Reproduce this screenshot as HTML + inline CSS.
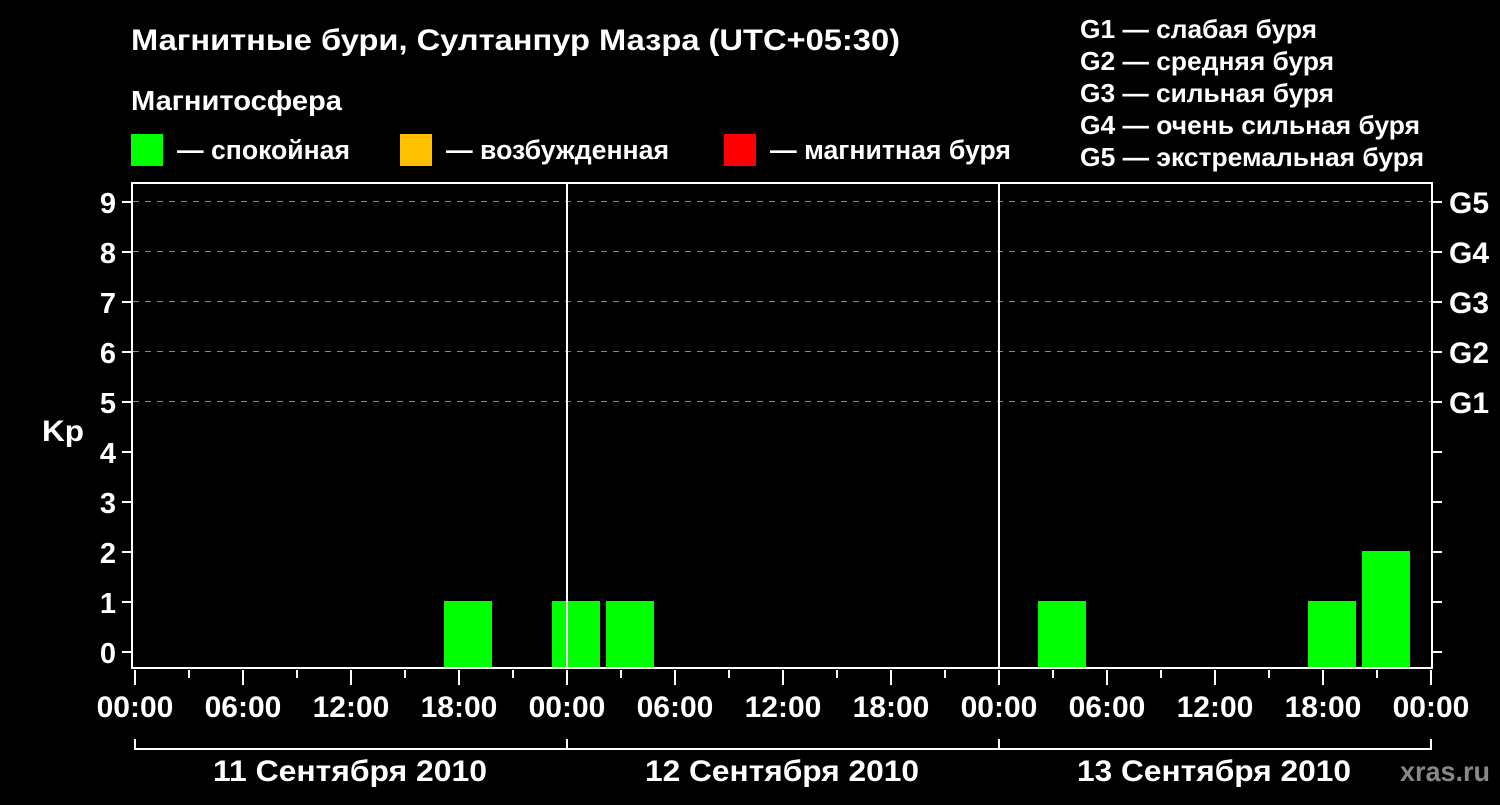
<!DOCTYPE html>
<html><head><meta charset="utf-8"><style>
body{margin:0;background:#000;width:1500px;height:800px;overflow:hidden;font-family:"Liberation Sans",sans-serif;font-weight:bold;color:#fff}
svg text{font-family:"Liberation Sans",sans-serif;font-weight:bold;fill:#fff}
</style></head><body>
<svg width="1500" height="800" xmlns="http://www.w3.org/2000/svg">
<text x="131" y="50" font-size="30" textLength="769" lengthAdjust="spacingAndGlyphs">Магнитные бури, Султанпур Мазра (UTC+05:30)</text>
<text x="131" y="110" font-size="28" textLength="211" lengthAdjust="spacingAndGlyphs">Магнитосфера</text>
<rect x="131" y="134" width="32" height="32" fill="#00ff00"/>
<text x="177" y="159" font-size="27" textLength="173" lengthAdjust="spacingAndGlyphs">— спокойная</text>
<rect x="400" y="134" width="32" height="32" fill="#ffc000"/>
<text x="446" y="159" font-size="27" textLength="223" lengthAdjust="spacingAndGlyphs">— возбужденная</text>
<rect x="724" y="134" width="32" height="32" fill="#ff0000"/>
<text x="770" y="159" font-size="27" textLength="241" lengthAdjust="spacingAndGlyphs">— магнитная буря</text>
<g font-size="26">
<text x="1080" y="38" textLength="237" lengthAdjust="spacingAndGlyphs">G1 — слабая буря</text>
<text x="1080" y="70" textLength="254" lengthAdjust="spacingAndGlyphs">G2 — средняя буря</text>
<text x="1080" y="102" textLength="254" lengthAdjust="spacingAndGlyphs">G3 — сильная буря</text>
<text x="1080" y="134" textLength="340" lengthAdjust="spacingAndGlyphs">G4 — очень сильная буря</text>
<text x="1080" y="166" textLength="344" lengthAdjust="spacingAndGlyphs">G5 — экстремальная буря</text>
</g>
<g stroke="#888" stroke-dasharray="6,6" stroke-width="1">
<line x1="133" y1="201.5" x2="1432" y2="201.5"/><line x1="133" y1="251.5" x2="1432" y2="251.5"/>
<line x1="133" y1="301.5" x2="1432" y2="301.5"/><line x1="133" y1="351.5" x2="1432" y2="351.5"/>
<line x1="133" y1="401.5" x2="1432" y2="401.5"/>
</g>
<g fill="#00ff00">
<rect x="444" y="601" width="48" height="67"/>
<rect x="552" y="601" width="48" height="67"/>
<rect x="606" y="601" width="48" height="67"/>
<rect x="1038" y="601" width="48" height="67"/>
<rect x="1308" y="601" width="48" height="67"/>
<rect x="1362" y="551" width="48" height="117"/>
</g>
<g stroke="#fff" stroke-width="2" fill="none">
<path d="M132 668V183H1432V668Z"/>
<line x1="567" y1="183" x2="567" y2="668"/><line x1="999" y1="183" x2="999" y2="668"/>
<path d="M122 652h9M122 602h9M122 552h9M122 502h9M122 452h9M122 402h9M122 352h9M122 302h9M122 252h9M122 202h9"/>
<path d="M1433 652h9M1433 602h9M1433 552h9M1433 502h9M1433 452h9M1433 402h9M1433 352h9M1433 302h9M1433 252h9M1433 202h9"/>
<path d="M135 670v15M189 670v8M243 670v15M297 670v8M351 670v15M405 670v8M459 670v15M513 670v8M567 670v15M621 670v8M675 670v15M729 670v8M783 670v15M837 670v8M891 670v15M945 670v8M999 670v15M1053 670v8M1107 670v15M1161 670v8M1215 670v15M1269 670v8M1323 670v15M1377 670v8M1431 670v15"/>
<path d="M135 739v10H1431v-10M567 739v10M999 739v10"/>
</g>
<g font-size="29" text-anchor="end">
<text x="116" y="663">0</text><text x="116" y="613">1</text><text x="116" y="563">2</text><text x="116" y="513">3</text><text x="116" y="463">4</text><text x="116" y="413">5</text><text x="116" y="363">6</text><text x="116" y="313">7</text><text x="116" y="263">8</text><text x="116" y="213">9</text>
</g>
<text x="42" y="441" font-size="30" textLength="42" lengthAdjust="spacingAndGlyphs">Kp</text>
<g font-size="30">
<text x="1449" y="413">G1</text><text x="1449" y="363">G2</text><text x="1449" y="313">G3</text><text x="1449" y="263">G4</text><text x="1449" y="213">G5</text>
</g>
<g font-size="30" text-anchor="middle">
<text x="135" y="717">00:00</text><text x="243" y="717">06:00</text><text x="351" y="717">12:00</text><text x="459" y="717">18:00</text>
<text x="567" y="717">00:00</text><text x="675" y="717">06:00</text><text x="783" y="717">12:00</text><text x="891" y="717">18:00</text>
<text x="999" y="717">00:00</text><text x="1107" y="717">06:00</text><text x="1215" y="717">12:00</text><text x="1323" y="717">18:00</text><text x="1431" y="717">00:00</text>
</g>
<g font-size="30" text-anchor="middle">
<text x="350" y="781" textLength="274" lengthAdjust="spacingAndGlyphs">11 Сентября 2010</text><text x="782" y="781" textLength="274" lengthAdjust="spacingAndGlyphs">12 Сентября 2010</text><text x="1214" y="781" textLength="274" lengthAdjust="spacingAndGlyphs">13 Сентября 2010</text>
</g>
<text x="1400" y="781" font-size="28" style="fill:#888" textLength="90" lengthAdjust="spacingAndGlyphs">xras.ru</text>
</svg>
</body></html>
